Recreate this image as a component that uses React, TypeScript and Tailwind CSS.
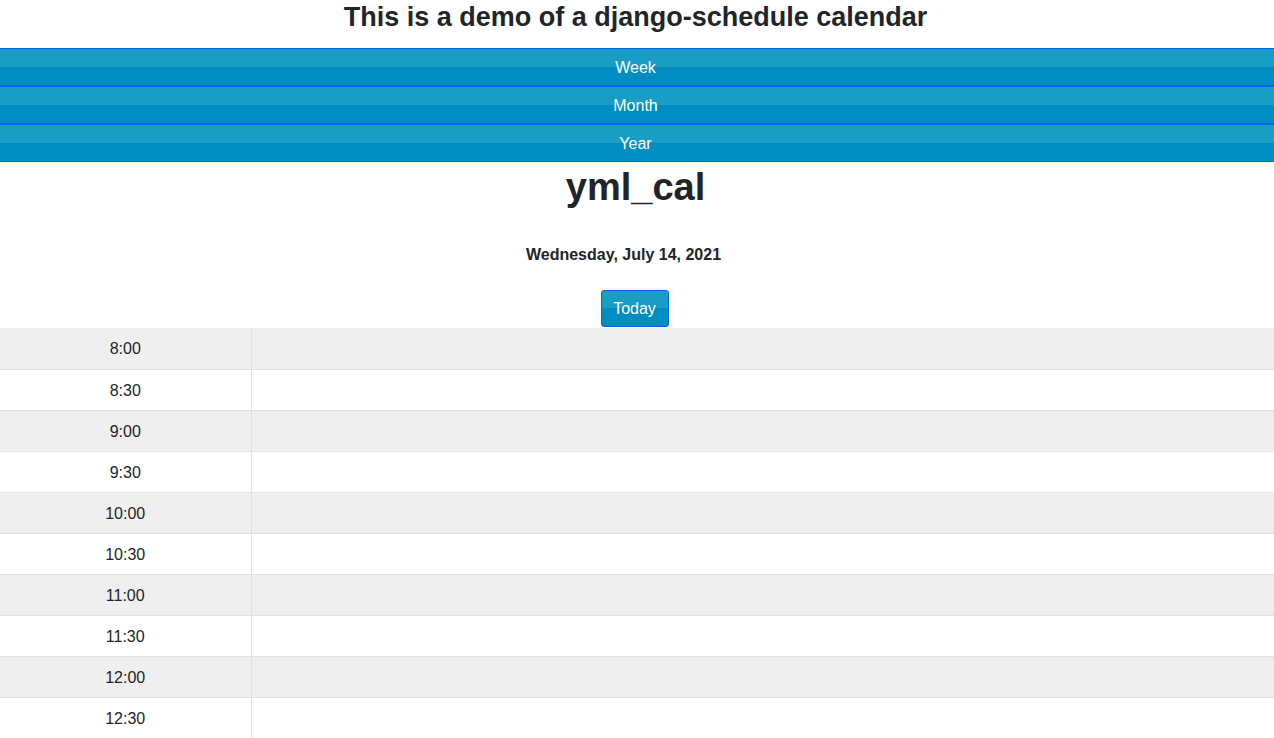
const times = ['8:00', '8:30', '9:00', '9:30', '10:00', '10:30', '11:00', '11:30', '12:00', '12:30']

function NavButton({ label }: { label: string }) {
  return (
    <div className="flex h-[38px] items-center justify-center border-y border-[#0062f0] bg-[linear-gradient(#1a9dc4_0%,#1a9dc4_50%,#008dc1_50%,#008dc1_100%)] pt-[2px] pr-[3px] text-[16px] text-white">
      {label}
    </div>
  )
}

export default function App() {
  return (
    <div className="bg-white font-['Liberation_Sans',Arial,sans-serif] text-[#212529]">
      <h2 className="flex h-[48px] items-start justify-center pt-[1px] pr-[3px] text-[27px] font-bold leading-[32px]">
        This is a demo of a django-schedule calendar
      </h2>
      <nav>
        <NavButton label="Week" />
        <NavButton label="Month" />
        <NavButton label="Year" />
      </nav>
      <div className="flex flex-col items-center pr-[3px]">
        <h1 className="mt-[1px] text-[38px] font-bold leading-[48px]">yml_cal</h1>
        <div className="mt-[34px] mr-[24px] text-[16px] font-bold leading-[20px]">Wednesday, July 14, 2021</div>
        <button className="mt-[25px] mr-[2px] h-[37px] w-[68px] rounded-[3px] border border-[#0062f0] bg-[linear-gradient(#1a9dc4_0%,#1a9dc4_50%,#008dc1_50%,#008dc1_100%)] text-[16px] text-white">
          Today
        </button>
      </div>
      <table className="mt-[1px] w-full border-collapse text-[16px]">
        <tbody>
          {times.map((t, i) => (
            <tr key={t} className={i % 2 === 0 ? 'bg-[#efefef]' : 'bg-white'}>
              <td className="h-[41px] w-[251px] border-r border-b border-[#dee2e6] pt-[2px] text-center">{t}</td>
              <td className="border-b border-[#dee2e6]"></td>
            </tr>
          ))}
        </tbody>
      </table>
    </div>
  )
}
